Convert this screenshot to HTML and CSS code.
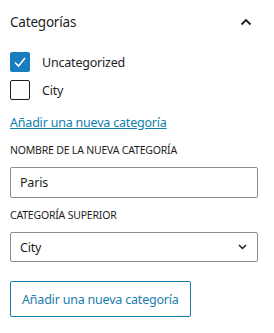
FILE: index.html
```html
<!DOCTYPE html>
<html lang="es">
<head>
    <meta charset="UTF-8">
    <meta name="viewport" content="width=device-width, initial-scale=1.0">
    <title>Categorías</title>
    <link rel="stylesheet" href="styles.css">
</head>
<body>
    <div class="panel">
        <!-- Header -->
        <div class="panel-header">
            <span class="panel-title">Categorías</span>
            <svg class="toggle" width="12" height="8" viewBox="0 0 12 8">
                <path d="M1.5 6.5 L6 2 L10.5 6.5" fill="none" stroke="#1e1e1e" stroke-width="1.8"/>
            </svg>
        </div>

        <!-- Category list -->
        <ul class="cat-list">
            <li class="cat-item">
                <span class="check checked">
                    <svg width="14" height="12" viewBox="0 0 14 12">
                        <path d="M2 6.5 L5.5 10 L12 2" fill="none" stroke="#fff" stroke-width="1.6"/>
                    </svg>
                </span>
                <span>Uncategorized</span>
            </li>
            <li class="cat-item">
                <span class="check"></span>
                <span>City</span>
            </li>
        </ul>

        <a class="add-link" href="#">Añadir una nueva categoría</a>

        <!-- New category form -->
        <form class="new-cat">
            <label class="field-label" for="catName">Nombre de la nueva categoría</label>
            <input class="field" type="text" id="catName" value="Paris">

            <label class="field-label" for="catParent">Categoría superior</label>
            <div class="select">
                <span>City</span>
                <svg width="9" height="6" viewBox="0 0 9 6">
                    <path d="M1 1 L4.5 4.5 L8 1" fill="none" stroke="#1e1e1e" stroke-width="1.5"/>
                </svg>
            </div>

            <button class="add-btn" type="button">Añadir una nueva categoría</button>
        </form>
    </div>
</body>
</html>
```
FILE: styles.css
```css
body {
    margin: 0;
    background-color: #fff;
    font-family: "Noto Sans", "Open Sans", sans-serif;
    color: #1e1e1e;
    letter-spacing: -0.2px;
}

.panel {
    padding: 0 16px 0 10px;
}

.panel-header {
    display: flex;
    justify-content: space-between;
    align-items: center;
    height: 44px;
}

.panel-title {
    font-size: 13.5px;
}

.toggle {
    margin-right: 6px;
}

.cat-list {
    list-style: none;
    margin: 8px 0 0;
    padding: 0;
}

.cat-item {
    display: flex;
    align-items: center;
    gap: 12px;
    height: 20px;
    margin-bottom: 8px;
    font-size: 12.5px;
}

.check {
    width: 20px;
    height: 20px;
    box-sizing: border-box;
    border: 1px solid #1e1e1e;
    border-radius: 2px;
    display: flex;
    align-items: center;
    justify-content: center;
}

.check.checked {
    background-color: #1a7dbf;
    border-color: #1a7dbf;
}

.add-link {
    display: block;
    margin-top: 14px;
    font-size: 12.5px;
    color: #0f7fad;
}

.new-cat {
    margin-top: 12px;
}

.field-label {
    display: block;
    font-size: 10.5px;
    text-transform: uppercase;
    margin-bottom: 10px;
}

.field {
    display: block;
    width: 100%;
    height: 31px;
    box-sizing: border-box;
    border: 1px solid #8c8c8c;
    border-radius: 2px;
    padding: 0 9px;
    font-family: inherit;
    font-size: 12.5px;
    letter-spacing: -0.2px;
    color: #1e1e1e;
    margin-top: 0;
    margin-bottom: 10px;
}

.select {
    display: flex;
    justify-content: space-between;
    align-items: center;
    height: 30px;
    box-sizing: border-box;
    border: 1px solid #8c8c8c;
    border-radius: 2px;
    padding: 0 10px 0 9px;
    font-size: 12.5px;
}

.add-btn {
    margin-top: 19px;
    height: 36px;
    padding: 0 11px;
    background-color: #fff;
    border: 1px solid #1a7dab;
    border-radius: 2px;
    color: #1a7dab;
    font-family: inherit;
    font-size: 12.5px;
    letter-spacing: -0.2px;
    cursor: pointer;
}
```
